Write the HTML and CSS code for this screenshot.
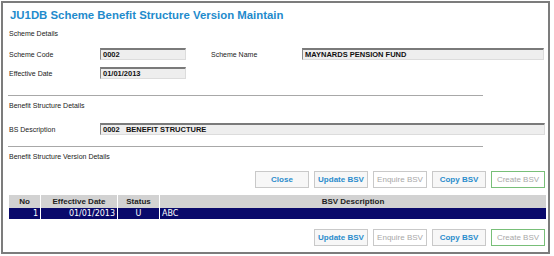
FILE: index.html
```html
<!DOCTYPE html>
<html lang="en">
<head>
  <meta charset="UTF-8">
  <title>JU1DB Scheme Benefit Structure Version Maintain</title>
  <link rel="stylesheet" href="styles.css">
</head>
<body>

<div class="frame">
  <h1 class="title">JU1DB Scheme Benefit Structure Version Maintain</h1>

  <div class="section">Scheme Details</div>
  <div class="field-row first">
    <span class="label">Scheme Code</span>
    <span class="input short">0002</span>
    <span class="label name-label">Scheme Name</span>
    <span class="input wide">MAYNARDS PENSION FUND</span>
  </div>
  <div class="field-row second">
    <span class="label">Effective Date</span>
    <span class="input short">01/01/2013</span>
  </div>

  <hr class="rule rule-one">
  <div class="section">Benefit Structure Details</div>
  <div class="field-row bs-row">
    <span class="label">BS Description</span>
    <span class="input full">0002&nbsp;&nbsp;&nbsp;BENEFIT STRUCTURE</span>
  </div>

  <hr class="rule rule-two">
  <div class="section">Benefit Structure Version Details</div>

  <div class="buttons top">
    <button class="btn">Close</button>
    <button class="btn">Update BSV</button>
    <button class="btn disabled">Enquire BSV</button>
    <button class="btn">Copy BSV</button>
    <button class="btn disabled create">Create BSV</button>
  </div>

  <table class="grid">
    <thead>
      <tr>
        <th class="c-no">No</th>
        <th class="c-date">Effective Date</th>
        <th class="c-status">Status</th>
        <th>BSV Description</th>
      </tr>
    </thead>
    <tbody>
      <tr class="selected">
        <td class="num">1</td>
        <td class="num">01/01/2013</td>
        <td class="mid">U</td>
        <td>ABC</td>
      </tr>
    </tbody>
  </table>

  <div class="buttons bottom">
    <button class="btn">Update BSV</button>
    <button class="btn disabled">Enquire BSV</button>
    <button class="btn">Copy BSV</button>
    <button class="btn disabled create">Create BSV</button>
  </div>
</div>

</body>
</html>
```

FILE: styles.css
```css
body {
  margin: 0;
  background-color: #fff;
  font-family: "Liberation Sans", Arial, sans-serif;
  color: #222;
}

.frame {
  box-sizing: border-box;
  width: 549px;
  height: 253px;
  margin: 1px;
  padding: 0 3px 0 6px;
  border: 2px solid #7c7c7c;
}

.title {
  margin: 0;
  padding-top: 4px;
  height: 17px;
  line-height: 16px;
  font-size: 11.4px;
  font-weight: bold;
  color: #1f8bcc;
  padding-left: 1px;
}

.section {
  height: 20px;
  line-height: 20px;
  font-size: 7px;
}

.field-row {
  display: flex;
  align-items: center;
  height: 12px;
  font-size: 7px;
}

.field-row.first {
  margin-top: 4px;
}

.field-row.second {
  margin-top: 7px;
}

.field-row.bs-row {
  margin-top: 7px;
}

.label {
  width: 91px;
  flex: none;
}

.name-label {
  width: 91px;
  margin-left: 25px;
}

.input {
  box-sizing: border-box;
  height: 12px;
  line-height: 10px;
  padding-left: 2px;
  background-color: #eeeeee;
  border-top: 2px solid #7a7a7a;
  border-left: 1px solid #8a8a8a;
  border-right: 1px solid #dcdcdc;
  border-bottom: 1px solid #dcdcdc;
  font-size: 7.5px;
  font-weight: bold;
  color: #111;
  white-space: pre;
}

.input.short {
  width: 86px;
}

.input.wide {
  width: 242px;
}

.input.full {
  width: 445px;
}

.rule {
  width: 475px;
  height: 0;
  margin: 0 0 0 -1px;
  border: none;
  border-top: 1px solid #a8a8a8;
}

.rule-one {
  margin-top: 16px;
}

.rule-two {
  margin-top: 11px;
}

.buttons {
  display: flex;
  justify-content: flex-end;
  gap: 5px;
}

.buttons.top {
  margin-top: 4px;
}

.buttons.bottom {
  margin-top: 10px;
}

.btn {
  box-sizing: border-box;
  width: 54px;
  height: 17px;
  padding: 0;
  background-color: #f7f7f7;
  border: 1px solid #c9c9c9;
  font-family: "Liberation Sans", Arial, sans-serif;
  font-size: 8px;
  font-weight: bold;
  color: #2a8ccc;
}

.btn.disabled {
  font-weight: normal;
  color: #a8a8a8;
  background-color: #fff;
}

.btn.create {
  border-color: #78bf78;
}

.grid {
  width: 537px;
  margin-top: 7px;
  border-collapse: collapse;
  font-size: 8px;
}

.grid th {
  height: 13px;
  padding: 0;
  background-color: #d2d2d2;
  border-left: 1px solid #fff;
  font-weight: bold;
  color: #222;
}

.grid th:first-child {
  border-left: none;
}

.c-no {
  width: 31px;
}

.c-date {
  width: 76px;
}

.c-status {
  width: 41px;
}

.grid td {
  height: 11px;
  padding: 0 2px;
  border-left: 1px solid #fff;
  font-family: "DejaVu Sans", Verdana, sans-serif;
  font-size: 8px;
}

.grid td:first-child {
  border-left: none;
}

.selected td {
  background-color: #09096b;
  color: #fff;
}

.num {
  text-align: right;
}

.mid {
  text-align: center;
}
```
